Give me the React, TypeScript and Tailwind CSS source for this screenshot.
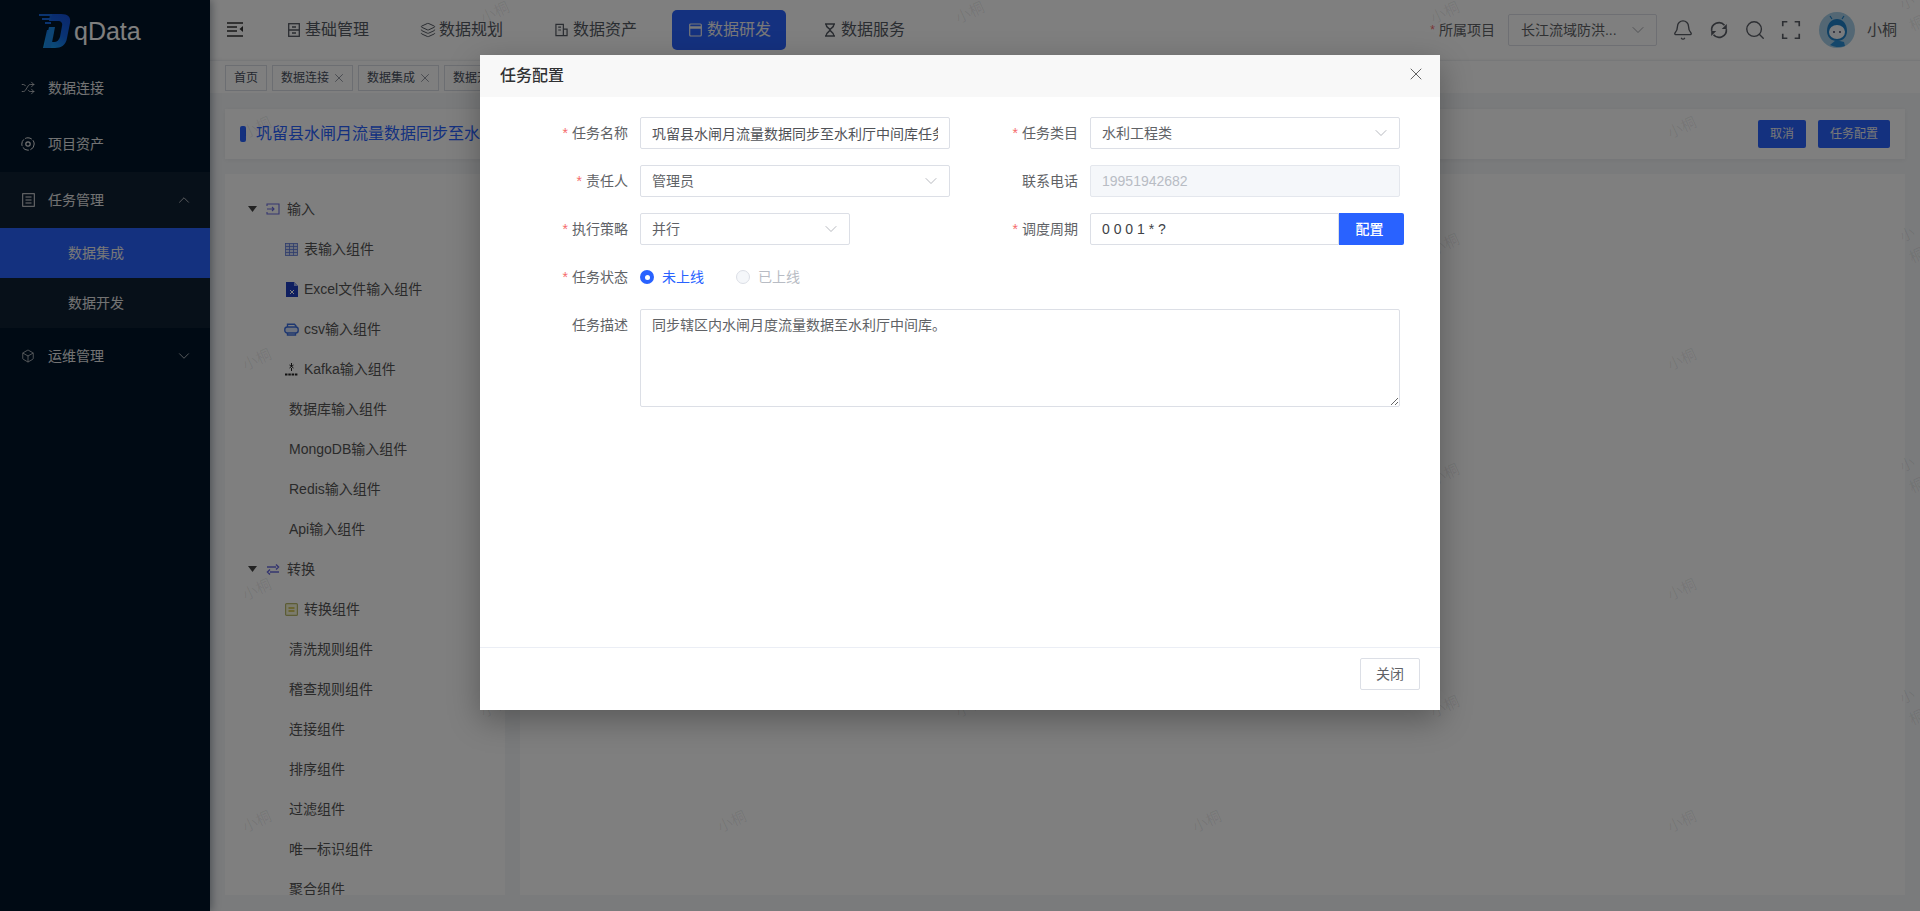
import { ReactNode } from "react"
import { Bell, Box, ChevronDown, ChevronUp, Layers, Search, Shuffle, X } from "lucide-react"

const watermarks = [
  [257, 128], [732, 128], [1207, 128], [1682, 128],
  [257, 360], [732, 360], [1207, 360], [1682, 360],
  [257, 590], [732, 590], [1207, 590], [1682, 590],
  [257, 822], [732, 822], [1207, 822], [1682, 822],
  [495, 13], [970, 13], [1445, 13], [1912, 13],
  [495, 245], [970, 245], [1445, 245], [1912, 245],
  [495, 475], [970, 475], [1445, 475], [1912, 475],
  [495, 707], [970, 707], [1445, 707], [1912, 707],
]

function Logo() {
  return (
    <div className="h-[60px] flex items-center pl-[38px]">
      <svg width="34" height="36" viewBox="0 0 34 36" className="mb-[-2px]">
        <defs>
          <linearGradient id="logoD" x1="0.2" y1="1" x2="0.8" y2="0">
            <stop offset="0" stopColor="#19a4f0" />
            <stop offset="0.5" stopColor="#1266e8" />
            <stop offset="1" stopColor="#1450d8" />
          </linearGradient>
        </defs>
        <path d="M12 1h11c7 0 10 3 9 9l-3 15c-1 7-6 10-12 10H5l4-18h7l-3 12h3c3 0 5-2 6-5l2-11c1-3-1-5-4-5H11z" fill="url(#logoD)" />
        <path d="M11 14h6l-4 21H6z" fill="#1a8bea" />
        <path d="M1 1h13v2H1zM4 5h9v2H4zM7 9h6v2H7z" fill="#1668e0" />
      </svg>
      <span className="ml-[2px] mt-[3px] text-[25px] leading-none text-white">qData</span>
    </div>
  )
}

function SideItem({ icon, label, open, arrow }: { icon: ReactNode; label: string; open?: boolean; arrow?: "up" | "down" }) {
  return (
    <div className={`h-14 flex items-center pl-[21px] pr-[17px] text-sm text-[#e6e6e6] ${open ? "bg-[#0f2033]" : ""}`}>
      <span className="w-[14px] h-[14px] flex items-center justify-center">{icon}</span>
      <span className="ml-[13px]">{label}</span>
      {arrow === "up" && <ChevronUp size={18} strokeWidth={1} className="ml-auto" />}
      {arrow === "down" && <ChevronDown size={18} strokeWidth={1} className="ml-auto" />}
    </div>
  )
}

function Sidebar() {
  return (
    <aside className="relative z-10 w-[210px] shrink-0 bg-[#001529] shadow-[2px_0_8px_rgba(0,21,41,0.35)]">
      <Logo />
      <SideItem icon={<Shuffle size={16} strokeWidth={1.3} />} label="数据连接" />
      <SideItem
        icon={
          <svg width="14" height="14" viewBox="0 0 14 14" fill="none" stroke="currentColor">
            <circle cx="7" cy="7" r="6.2" strokeDasharray="7 1.5" />
            <circle cx="7" cy="7" r="2.2" strokeWidth="1.2" />
          </svg>
        }
        label="项目资产"
      />
      <SideItem
        icon={
          <svg width="13" height="14" viewBox="0 0 13 14" fill="none" stroke="currentColor">
            <rect x="0.7" y="0.7" width="11.6" height="12.6" />
            <path d="M3.5 4h6M3.5 7h6M3.5 10h6" />
          </svg>
        }
        label="任务管理"
        open
        arrow="up"
      />
      <div className="h-[50px] flex items-center pl-[68px] text-sm text-[#f0f0f0] bg-[#2962ff]">数据集成</div>
      <div className="h-[50px] flex items-center pl-[68px] text-sm text-[#e6e6e6] bg-[#0f2033]">数据开发</div>
      <SideItem icon={<Box size={16} strokeWidth={1.2} />} label="运维管理" arrow="down" />
    </aside>
  )
}

function NavItem({ icon, label, active }: { icon: ReactNode; label: string; active?: boolean }) {
  return (
    <div className={`w-[114px] h-10 flex items-center pl-[17px] gap-[5px] rounded-[5px] ${active ? "bg-[#2962ff] text-[#f0f0f0]" : "text-[#555a63]"}`}>
      <span className="w-[13px] flex justify-center">{icon}</span>
      <span className="text-base leading-none">{label}</span>
    </div>
  )
}

function Header() {
  return (
    <header className="h-[60px] shrink-0 flex items-center bg-white pl-[17px] pr-[23px]">
      <svg width="16" height="15" viewBox="0 0 16 15" fill="none" className="mb-[1px]">
        <path d="M0 1h16M0 5h10M0 9h10M0 14h16" stroke="#333" strokeWidth="1.3" />
        <path d="M16 4v6l-3.5-3z" fill="#333" />
      </svg>
      <nav className="ml-[27px] flex gap-5">
        <NavItem
          label="基础管理"
          icon={
            <svg width="12" height="14" viewBox="0 0 12 14" fill="none" stroke="currentColor" strokeWidth="1.3">
              <rect x="0.7" y="0.7" width="10.6" height="12.6" />
              <path d="M0.7 7h10.6M4 4h4M4 10h4" />
            </svg>
          }
        />
        <NavItem label="数据规划" icon={<Layers size={16} strokeWidth={1.5} className="shrink-0" />} />
        <NavItem
          label="数据资产"
          icon={
            <svg width="14" height="14" viewBox="0 0 14 14" fill="none" stroke="currentColor" strokeWidth="1.3">
              <path d="M1 1h8v12H1zM9 6h4v7H9zM3.5 4h3M3.5 7h3" />
            </svg>
          }
        />
        <NavItem
          active
          label="数据研发"
          icon={
            <svg width="13" height="14" viewBox="0 0 13 14" fill="none" stroke="currentColor" strokeWidth="1.2">
              <rect x="0.7" y="1" width="11.6" height="12" rx="1" />
              <path d="M0.7 4.5h11.6" strokeWidth="2.5" />
            </svg>
          }
        />
        <NavItem
          label="数据服务"
          icon={
            <svg width="12" height="14" viewBox="0 0 12 14" fill="none" stroke="currentColor" strokeWidth="1.5">
              <path d="M1 1h10M1 13h10M2 1c0 4 4 4.5 4 6s-4 2-4 6M10 1c0 4-4 4.5-4 6s4 2 4 6" />
            </svg>
          }
        />
      </nav>
      <div className="ml-auto flex items-center">
        <span className="text-xs text-[#f56c6c] mr-[4px]">*</span>
        <span className="text-sm text-[#606266]">所属项目</span>
        <div className="ml-[13px] w-[149px] h-8 flex items-center justify-between border border-[#dcdfe6] rounded-[2px] pl-3 pr-[8px] text-sm text-[#606266]">
          <span>长江流域防洪...</span>
          <ChevronDown size={20} strokeWidth={1} className="text-[#909399]" />
        </div>
        <div className="ml-[15px] flex items-center gap-[14px] text-[#5a5e66]">
          <Bell size={22} strokeWidth={1.5} />
          <svg width="22" height="22" viewBox="0 0 24 24" fill="none" stroke="currentColor" strokeWidth="1.8">
            <path d="M4 13a8 8 0 0 1 14-6.2" />
            <path d="M20 11a8 8 0 0 1-14 6.2" />
            <path d="M20.5 5.5v5.5H15z" fill="currentColor" stroke="none" />
            <path d="M3.5 18.500V13H9z" fill="currentColor" stroke="none" />
          </svg>
          <Search size={22} strokeWidth={1.5} />
          <svg width="22" height="22" viewBox="0 0 24 24" fill="none" stroke="currentColor" strokeWidth="1.8">
            <path d="M3 8V3h5M16 3h5v5M21 16v5h-5M8 21H3v-5" />
          </svg>
        </div>
        <svg width="36" height="36" viewBox="0 0 36 36" className="ml-[17px]">
          <circle cx="18" cy="18" r="18" fill="#a6cfe8" />
          <path d="M8 19c0-8 5-12 10-12s10 4 10 12c0 6-4 10-10 10S8 25 8 19z" fill="#1e80c8" />
          <ellipse cx="18" cy="20" rx="8" ry="7" fill="#f3f7fa" />
          <circle cx="15" cy="20" r="0.9" fill="#335" />
          <circle cx="21" cy="20" r="0.9" fill="#335" />
          <path d="M13 7l-2-3M23 7l2-3" stroke="#1e80c8" strokeWidth="1.2" />
          <path d="M11 33l6-5 8 2 1 4c-5 2-11 1-15-1z" fill="#2b8ed6" />
        </svg>
        <span className="ml-3 text-[15px] text-[#606266]">小桐</span>
      </div>
    </header>
  )
}

function Tag({ label, close = true }: { label: string; close?: boolean }) {
  return (
    <div className="h-[26px] flex items-center border border-[#d8dce5] bg-white px-2 text-xs text-[#495060]">
      <span>{label}</span>
      {close && <X size={14} strokeWidth={1} className="ml-[3px] -mr-[2px]" />}
    </div>
  )
}

function TagsBar() {
  return (
    <div className="h-[33px] shrink-0 flex gap-[5px] items-start pt-1 pl-[15px] bg-white border-t border-[#eef0f3] shadow-[0_1px_4px_rgba(0,21,41,0.12)]">
      <Tag label="首页" close={false} />
      <Tag label="数据连接" />
      <Tag label="数据集成" />
      <Tag label="数据开发" />
    </div>
  )
}

function TreeGroup({ icon, label }: { icon: ReactNode; label: string }) {
  return (
    <div className="h-10 flex items-center pl-[23px]">
      <svg width="9" height="6" viewBox="0 0 9 6">
        <path d="M0 0h9L4.5 6z" fill="#444" />
      </svg>
      <span className="ml-[9px] w-[14px] flex justify-center">{icon}</span>
      <span className="ml-[7px]">{label}</span>
    </div>
  )
}

function TreeLeaf({ icon, label }: { icon?: ReactNode; label: string }) {
  return (
    <div className={`h-10 flex items-center ${icon ? "pl-[60px]" : "pl-[64px]"}`}>
      {icon && <span className="w-[13px] mr-[6px] flex justify-center">{icon}</span>}
      <span>{label}</span>
    </div>
  )
}

function Tree() {
  return (
    <div className="w-[280px] shrink-0 bg-white pt-[15px] overflow-hidden text-sm text-[#555]">
      <TreeGroup
        label="输入"
        icon={
          <svg width="14" height="12" viewBox="0 0 14 12" fill="none" stroke="#6a6ce0" strokeWidth="1.1">
            <path d="M1 3V1h12v10H1V9M1 6h7M6 4l2 2-2 2" />
          </svg>
        }
      />
      <TreeLeaf
        label="表输入组件"
        icon={
          <svg width="13" height="13" viewBox="0 0 13 13" fill="#d5dcf5" stroke="#5c78d8" strokeWidth="0.8">
            <rect x="0.5" y="0.5" width="12" height="12" />
            <path d="M0.5 3.500h12M0.5 6.500h12M0.5 9.500h12M4.500 0.500v12M8.500 0.500v12" />
          </svg>
        }
      />
      <TreeLeaf
        label="Excel文件输入组件"
        icon={
          <svg width="12" height="15" viewBox="0 0 12 15" className="shrink-0">
            <path d="M0 0h8l4 4v11H0z" fill="#1f3fc0" />
            <path d="M8 0l4 4H8z" fill="#9fb0ec" />
            <path d="M4 8l4 4M8 8l-4 4" stroke="#fff" strokeWidth="1" />
          </svg>
        }
      />
      <TreeLeaf
        label="csv输入组件"
        icon={
          <svg width="15" height="13" viewBox="0 0 15 13" fill="none" stroke="#3d6fe0" strokeWidth="1.4" className="shrink-0">
            <path d="M3.5 4V1.200h7L12 3v1" />
            <rect x="0.8" y="4" width="13.4" height="6" rx="2.500" fill="#dbe5fb" />
            <path d="M3.5 10v2h8v-2" />
          </svg>
        }
      />
      <TreeLeaf
        label="Kafka输入组件"
        icon={
          <svg width="13" height="14" viewBox="0 0 13 14" fill="none" stroke="#222" strokeWidth="1">
            <path d="M6.5 1v3M4.500 3l4 3M8.500 3l-4 3M6.500 6v3" />
            <path d="M0 12.500h13" strokeWidth="1.8" strokeDasharray="2.5 0.8" />
          </svg>
        }
      />
      <TreeLeaf label="数据库输入组件" />
      <TreeLeaf label="MongoDB输入组件" />
      <TreeLeaf label="Redis输入组件" />
      <TreeLeaf label="Api输入组件" />
      <TreeGroup
        label="转换"
        icon={
          <svg width="14" height="11" viewBox="0 0 14 11" fill="none" stroke="#6a6ce0" strokeWidth="1.5">
            <path d="M4 8h9M4 5.500L1.500 8 4 10.500M1 3h9M10 0.500L12.500 3 10 5.500" />
          </svg>
        }
      />
      <TreeLeaf
        label="转换组件"
        icon={
          <svg width="13" height="13" viewBox="0 0 13 13" fill="none">
            <rect x="0.6" y="0.6" width="11.8" height="11.8" rx="1" fill="#f7f7d8" stroke="#b9b96a" strokeWidth="1.2" />
            <path d="M3.5 5h6M3.5 8h6" stroke="#c9b93a" strokeWidth="1.5" />
          </svg>
        }
      />
      <TreeLeaf label="清洗规则组件" />
      <TreeLeaf label="稽查规则组件" />
      <TreeLeaf label="连接组件" />
      <TreeLeaf label="排序组件" />
      <TreeLeaf label="过滤组件" />
      <TreeLeaf label="唯一标识组件" />
      <TreeLeaf label="聚合组件" />
    </div>
  )
}

function Content() {
  return (
    <main className="flex-1 min-h-0 flex flex-col gap-[15px] bg-[#f4f6f8] px-[15px] pt-4 pb-4">
      <div className="h-[50px] shrink-0 flex items-center justify-between bg-white pl-[15px] pr-[15px] shadow-[0_1px_4px_rgba(0,21,41,0.05)]">
        <div className="flex items-center">
          <span className="w-[6px] h-4 rounded-[2px] bg-[#2962ff]" />
          <span className="ml-[10px] text-base text-[#2962ff]">巩留县水闸月流量数据同步至水利厅中间库任务</span>
        </div>
        <div className="flex gap-3 text-xs text-[#f0f0f0]">
          <button className="w-12 h-7 rounded-[2px] bg-[#2962ff]">取消</button>
          <button className="w-[72px] h-7 rounded-[2px] bg-[#2962ff]">任务配置</button>
        </div>
      </div>
      <div className="flex-1 min-h-0 flex gap-[15px]">
        <Tree />
        <div className="flex-1 bg-white" />
      </div>
    </main>
  )
}

function Label({ text, required, width }: { text: string; required?: boolean; width: string }) {
  return (
    <label className={`${width} shrink-0 pr-3 h-8 flex items-center justify-end text-sm text-[#606266]`}>
      {required && <span className="text-[#f56c6c] mr-[4px]">*</span>}
      {text}
    </label>
  )
}

function SelectBox({ value, width }: { value: string; width: string }) {
  return (
    <div className={`${width} h-8 flex items-center justify-between border border-[#dcdfe6] rounded-[2px] bg-white pl-[11px] pr-[8px] text-sm text-[#606266]`}>
      <span>{value}</span>
      <ChevronDown size={20} strokeWidth={1} className="text-[#a8abb2]" />
    </div>
  )
}

function TaskDialog() {
  return (
    <div className="absolute left-[480px] top-[55px] w-[960px] h-[655px] flex flex-col bg-white shadow-[0_10px_30px_rgba(0,0,0,0.3)]">
      <div className="h-[42px] shrink-0 flex items-center justify-between bg-[#f8f8f8] pl-5 pr-[14px]">
        <span className="text-base font-medium text-[#303133]">任务配置</span>
        <X size={20} strokeWidth={1} className="text-[#444] mb-[4px]" />
      </div>
      <div className="flex-1 flex flex-col gap-4 pt-5">
        <div className="flex">
          <div className="w-[470px] flex">
            <Label text="任务名称" required width="w-[160px]" />
            <input
              readOnly
              value="巩留县水闸月流量数据同步至水利厅中间库任务"
              className="w-[310px] h-8 border border-[#dcdfe6] rounded-[2px] px-[11px] text-sm text-[#505257] outline-none"
            />
          </div>
          <Label text="任务类目" required width="w-[140px]" />
          <SelectBox value="水利工程类" width="w-[310px]" />
        </div>
        <div className="flex">
          <div className="w-[470px] flex">
            <Label text="责任人" required width="w-[160px]" />
            <SelectBox value="管理员" width="w-[310px]" />
          </div>
          <Label text="联系电话" width="w-[140px]" />
          <input
            readOnly
            value="19951942682"
            className="w-[310px] h-8 border border-[#e4e7ed] rounded-[2px] bg-[#f5f7fa] px-[11px] text-sm text-[#b8bcc4] outline-none"
          />
        </div>
        <div className="flex">
          <div className="w-[470px] flex">
            <Label text="执行策略" required width="w-[160px]" />
            <SelectBox value="并行" width="w-[210px]" />
          </div>
          <Label text="调度周期" required width="w-[140px]" />
          <div className="flex">
            <input
              readOnly
              value="0 0 0 1 * ?"
              className="w-[249px] h-8 border border-[#dcdfe6] rounded-l-[2px] px-[11px] text-sm text-[#404246] outline-none"
            />
            <button className="w-[65px] h-8 pr-1 rounded-r-[2px] bg-[#2962ff] text-sm font-medium text-white">配置</button>
          </div>
        </div>
        <div className="flex">
          <Label text="任务状态" required width="w-[160px]" />
          <div className="flex items-center text-sm">
            <span className="w-[14px] h-[14px] rounded-full bg-[#2962ff] flex items-center justify-center">
              <span className="w-[5px] h-[5px] rounded-full bg-white" />
            </span>
            <span className="ml-2 text-[#2962ff]">未上线</span>
            <span className="ml-8 w-[14px] h-[14px] rounded-full border border-[#dcdfe6] bg-[#f5f7fa]" />
            <span className="ml-2 text-[#b8bcc4]">已上线</span>
          </div>
        </div>
        <div className="flex">
          <Label text="任务描述" width="w-[160px]" />
          <textarea
            readOnly
            value="同步辖区内水闸月度流量数据至水利厅中间库。"
            className="w-[760px] h-[98px] border border-[#dcdfe6] rounded-[2px] px-[11px] py-[5px] text-sm text-[#606266] outline-none resize-y"
          />
        </div>
      </div>
      <div className="h-[63px] shrink-0 flex items-start justify-end border-t border-[#ebeef5] pt-[10px] pr-5">
        <button className="w-[60px] h-8 border border-[#dcdfe6] rounded-[2px] bg-white text-sm text-[#606266]">关闭</button>
      </div>
    </div>
  )
}

export default function App() {
  return (
    <div className="relative h-screen flex overflow-hidden bg-white [font-family:'Liberation_Sans','Noto_Sans_CJK_SC',sans-serif]">
      <Sidebar />
      <div className="relative flex-1 min-w-0 flex flex-col">
        <Header />
        <TagsBar />
        <Content />
      </div>

      {/* watermark sits over the page, under the mask */}
      <div className="absolute inset-0 pointer-events-none overflow-hidden">
        {watermarks.map(([x, y]) => (
          <span
            key={`${x}-${y}`}
            className="absolute -translate-x-1/2 -translate-y-1/2 -rotate-[25deg] text-[15px] text-black/[0.08]"
            style={{ left: x, top: y }}
          >
            小桐
          </span>
        ))}
      </div>

      <div className="absolute inset-0 z-20 bg-black/50">
        <TaskDialog />
      </div>
    </div>
  )
}
